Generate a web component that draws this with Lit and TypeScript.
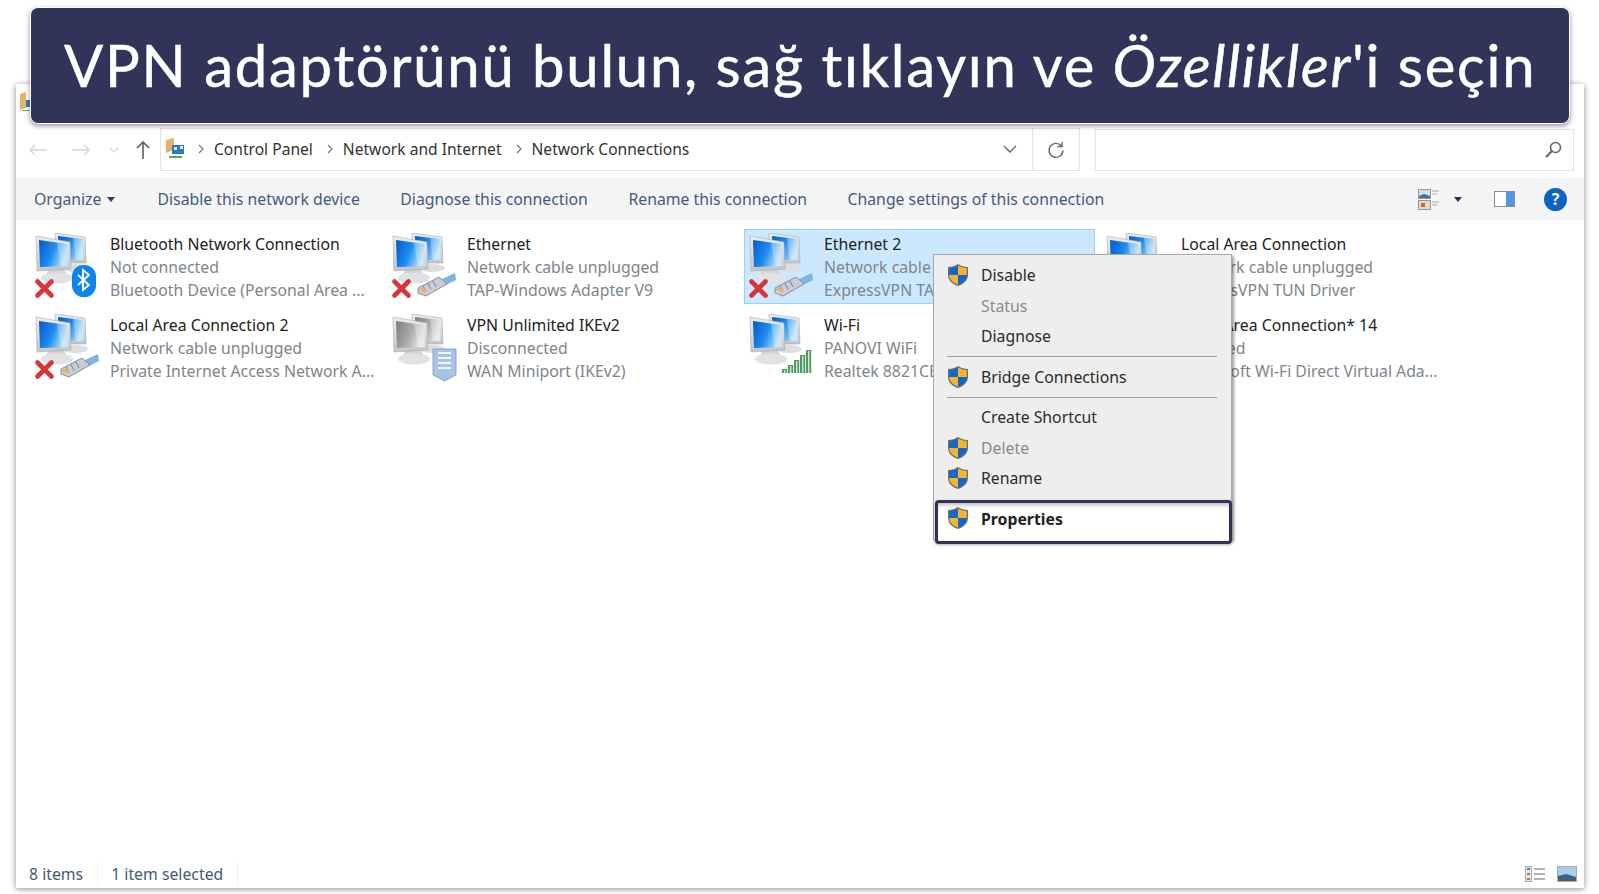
import { LitElement, html, css, svg } from 'lit';
import { customElement, property } from 'lit/decorators.js';

@customElement('net-icon')
class NetIcon extends LitElement {
  @property() badge = '';
  @property({ type: Boolean }) gray = false;
  @property({ type: Boolean }) cross = false;

  static styles = css`
    :host { display: block; width: 68px; height: 68px; flex: none; }
    svg { display: block; }
  `;

  monitor(frame: string, screen: string, shine: string) {
    return svg`
      <polygon points=${frame} fill="url(#frame)" stroke="#a8abae" stroke-width=".6" />
      <polygon points=${screen} fill="url(#screen)" />
      <polygon points=${shine} fill="#fff" opacity=".28" />
    `;
  }

  cable() {
    return svg`
      <path d="M52 46l13-6 1 7-12 6z" fill="#7fb4e4" />
      <path d="M28 55l21-11 8 7-21 12-8-3z" fill="#c9ced6" stroke="#7d858f" stroke-width=".9" />
      <path d="M33 53l3 6M38 50.500l3 6M43 48l3 6" stroke="#868e98" stroke-width="1.100" />
      <path d="M29 57l7 3 1-3-7-3z" fill="#e3b56a" />
    `;
  }

  bluetooth() {
    return svg`
      <rect x="39" y="32" width="24" height="32" rx="11.500" fill="#0d84ee" />
      <path d="M45 42l11 10-6 5V37l6 5-11 10" fill="none" stroke="#fff" stroke-width="1.900" />
    `;
  }

  server() {
    return svg`
      <path d="M43 35h23v26l-11.500 6-11.500-6z" fill="#a9c4e2" stroke="#7d95b2" stroke-width=".8" />
      <path d="M48 39h13M48 44h13M48 49h13M48 54h13" stroke="#eef5fc" stroke-width="2" />
    `;
  }

  wifi() {
    const bars = [[35, 55, 4], [41, 51, 8], [47, 46, 13], [53, 41, 18], [59, 36, 23]];
    return bars.map(([x, y, h]) => svg`
      <rect x=${x} y=${y} width="5.200" height=${h} fill="#4f9a63" />
      <rect x=${x + 2} y=${y + 1} width="1.400" height=${h - 1} fill="#cfe6d4" />
    `);
  }

  render() {
    const [a, b, c] = this.gray
      ? ['#7c7c7c', '#a8a8a8', '#e2e2e2']
      : ['#0858c8', '#1d8cf0', '#b4def9'];
    return html`<svg width="68" height="68" viewBox="0 0 68 68">
      <defs>
        <linearGradient id="screen" x1="0" y1="0" x2="1" y2=".35">
          <stop offset="0" stop-color=${a} />
          <stop offset=".55" stop-color=${b} />
          <stop offset="1" stop-color=${c} />
        </linearGradient>
        <linearGradient id="frame" x1="0" y1="0" x2="0" y2="1">
          <stop offset="0" stop-color="#eceded" />
          <stop offset="1" stop-color="#c3c6c8" />
        </linearGradient>
      </defs>
      <ellipse cx="42" cy="35" rx="13" ry="4" fill="#dcdedf" />
      ${this.monitor('22,0 52,4 53,30 23,30', '25,3 50,6 50.500,27 26,27', '40,4.500 50,6 50.500,27 43,27')}
      <path d="M16 35h14l4 7H13z" fill="#d2d4d5" />
      <ellipse cx="24" cy="45" rx="16" ry="5.500" fill="#e1e2e3" />
      ${this.monitor('3,3 37,9 38,36 4,38', '6,7 34,11 35,33 7,34', '24,9.500 34,11 35,33 28,33.300')}
      ${this.badge === 'cable' ? this.cable() : ''}
      ${this.badge === 'bluetooth' ? this.bluetooth() : ''}
      ${this.badge === 'server' ? this.server() : ''}
      ${this.badge === 'wifi' ? this.wifi() : ''}
      ${this.cross ? svg`<path d="M4.500 48.500l14 14M18.500 48.500l-14 14" stroke="#d8353a" stroke-width="4.600" stroke-linecap="round" />` : ''}
    </svg>`;
  }
}

const shield = svg`<svg width="22" height="24" viewBox="0 0 22 24">
  <path d="M11 1c3 2 6 3 10 3v8c0 5-4 9-10 11C5 21 1 17 1 12V4c4 0 7-1 10-3z" fill="#6d6f76" />
  <path d="M11 2.500V12H2.300V5c3.500 0 6-1 8.700-2.500z" fill="#1267c8" />
  <path d="M11 2.500c2.700 1.500 5.200 2.500 8.700 2.500v7H11z" fill="#f8b52c" />
  <path d="M2.300 12H11v9.500C6 19.700 2.300 16.500 2.300 12z" fill="#f8b52c" />
  <path d="M11 12h8.700c0 4.500-3.700 7.700-8.700 9.500z" fill="#1267c8" />
</svg>`;

const chevron = svg`<svg width="7" height="10" viewBox="0 0 7 10"><path d="M1 1l4 4-4 4" fill="none" stroke="#777" stroke-width="1.200" /></svg>`;

interface Item { title: string; status: string; device: string; badge: string; cross?: boolean; gray?: boolean; selected?: boolean }

const items: Item[] = [
  { title: 'Bluetooth Network Connection', status: 'Not connected', device: 'Bluetooth Device (Personal Area ...', badge: 'bluetooth', cross: true },
  { title: 'Ethernet', status: 'Network cable unplugged', device: 'TAP-Windows Adapter V9', badge: 'cable', cross: true },
  { title: 'Ethernet 2', status: 'Network cable unplugged', device: 'ExpressVPN TAP Adapter', badge: 'cable', cross: true, selected: true },
  { title: 'Local Area Connection', status: 'Network cable unplugged', device: 'ExpressVPN TUN Driver', badge: 'cable', cross: true },
  { title: 'Local Area Connection 2', status: 'Network cable unplugged', device: 'Private Internet Access Network A...', badge: 'cable', cross: true },
  { title: 'VPN Unlimited IKEv2', status: 'Disconnected', device: 'WAN Miniport (IKEv2)', badge: 'server', gray: true },
  { title: 'Wi-Fi', status: 'PANOVI WiFi', device: 'Realtek 8821CE Wireless LAN', badge: 'wifi' },
  { title: 'Local Area Connection* 14', status: 'Disabled', device: 'Microsoft Wi-Fi Direct Virtual Ada...', badge: 'wifi' },
];

const menu = [
  { label: 'Disable', shield: true },
  { label: 'Status', disabled: true },
  { label: 'Diagnose' },
  { sep: true },
  { label: 'Bridge Connections', shield: true },
  { sep: true },
  { label: 'Create Shortcut' },
  { label: 'Delete', shield: true, disabled: true },
  { label: 'Rename', shield: true },
];

@customElement('app-root')
class AppRoot extends LitElement {
  static styles = css`
    :host {
      display: block;
      position: relative;
      height: 894px;
      overflow: hidden;
      background: #fff;
      font-family: "Noto Sans", sans-serif;
      font-size: 15.800px;
      color: #2b2b2b;
    }
    .banner {
      position: absolute;
      left: 30px;
      top: 7px;
      width: 1540px;
      height: 117px;
      box-sizing: border-box;
      border: 1px solid #fff;
      border-radius: 8px;
      background: #323358;
      box-shadow: 0 2px 5px rgba(60, 60, 80, .55);
      color: #fff;
      display: flex;
      align-items: center;
      padding: 0 0 2px 33px;
      font-family: Lato, sans-serif;
      font-size: 58px;
      letter-spacing: 1.740px;
      -webkit-text-stroke: .5px #fff;
      white-space: nowrap;
      z-index: 3;
    }
    .window {
      position: absolute;
      left: 16px;
      top: 84px;
      width: 1568px;
      height: 804px;
      box-sizing: border-box;
      display: flex;
      flex-direction: column;
      background: #fff;
      box-shadow: 0 1px 6px rgba(0, 0, 0, .45);
    }
    .appicon { position: absolute; left: 4px; top: 8px; }
    .nav {
      display: flex;
      align-items: center;
      height: 43px;
      margin-top: 44px;
      padding: 0 10px 0 0;
      flex: none;
    }
    .navbtn { width: 43px; display: flex; justify-content: center; }
    .navbtn.small { width: 24px; }
    .navbtn.up { width: 34px; }
    .address {
      margin-left: 0;
      width: 920px;
      height: 43px;
      box-sizing: border-box;
      border: 1px solid #e4e4e4;
      display: flex;
      align-items: center;
      padding: 0 0 2px 4px;
      color: #333;
      font-size: 15.600px;
    }
    .address > svg:first-child { margin-right: 12px; }
    .crumb { margin: 0 14px 0 9px; white-space: nowrap; }
    .address .grow { flex: 1; }
    .refresh {
      width: 46px;
      height: 41px;
      margin-bottom: -2px;
      border-left: 1px solid #e4e4e4;
      display: flex;
      align-items: center;
      justify-content: center;
      margin-left: 15px;
    }
    .search {
      margin-left: 15px;
      flex: 1;
      height: 42px;
      box-sizing: border-box;
      border: 1px solid #e4e4e4;
      display: flex;
      align-items: center;
      justify-content: flex-end;
      padding-right: 11px;
    }
    .toolbar {
      display: flex;
      align-items: center;
      height: 42px;
      margin-top: 7px;
      padding-left: 18px;
      background: #f4f5f7;
      color: #47597a;
      flex: none;
      white-space: nowrap;
    }
    .toolbar span.cmd { margin-right: 40.500px; }
    .organize { display: flex; align-items: center; gap: 6px; margin-right: 42px; }
    .arrow { width: 0; height: 0; border: 4.500px solid transparent; border-top: 5px solid #3a3a55; border-bottom: 0; }
    .tools { margin-left: auto; display: flex; align-items: center; padding-right: 17px; }
    .viewarrow { margin-left: 14px; border-top-color: #2f2f55; }
    .pane { margin-left: 32px; }
    .help {
      width: 23px;
      height: 23px;
      border-radius: 50%;
      background: #0d62c4;
      color: #fff;
      font-weight: 700;
      font-size: 16px;
      line-height: 23px;
      text-align: center;
      margin-left: 29px;
    }
    .grid {
      flex: 1;
      display: grid;
      grid-template-columns: repeat(4, 351px);
      grid-auto-rows: 75px;
      gap: 6px;
      align-content: start;
      padding: 9px 0 0 14px;
    }
    .item {
      display: flex;
      box-sizing: border-box;
      padding: 3px 2px;
      border: 1px solid transparent;
      overflow: hidden;
    }
    .item.selected { background: #cce8ff; border-color: #99d1ff; }
    .text { margin-left: 9px; line-height: 22.800px; white-space: nowrap; min-width: 0; }
    .title { color: #222; }
    .muted { color: #7e858c; }
    .status {
      display: flex;
      align-items: center;
      height: 29px;
      padding: 0 0 0 13px;
      box-sizing: border-box;
      color: #47597a;
      flex: none;
    }
    .status span { padding-right: 14px; margin-right: 13px; border-right: 1px solid #f0f0f0; }
    .status .end { margin-left: auto; padding-right: 7px; display: flex; gap: 11px; }
    .menu {
      position: absolute;
      left: 933px;
      top: 254px;
      width: 299px;
      height: 286px;
      box-sizing: border-box;
      padding: 5px 0;
      background: #eee;
      border: 1px solid #a9a9a9;
      box-shadow: 2px 2px 3px rgba(0, 0, 0, .4);
      z-index: 2;
    }
    .mi {
      height: 30.500px;
      display: flex;
      align-items: center;
      padding-left: 47px;
      position: relative;
      color: #2b2b2b;
    }
    .mi.disabled { color: #8b8b8b; }
    .mi svg { position: absolute; left: 13px; top: 3px; }
    .sep { height: 1px; background: #a0a0a0; margin: 4.500px 14px 4.500px 13px; }
    .props {
      position: absolute;
      left: 1px;
      top: 245px;
      width: 297px;
      height: 44px;
      box-sizing: border-box;
      border: 3px solid #323358;
      border-radius: 4px;
      background: #fff;
      box-shadow: inset 0 4px 4px -2px #bbb, 0 1px 3px rgba(0, 0, 0, .3);
      display: flex;
      align-items: center;
      padding: 0 0 7px 43px;
      font-weight: 700;
      color: #222;
    }
    .props svg { position: absolute; left: 9px; top: 3px; }
  `;

  render() {
    return html`
      <div class="window">
        <svg class="appicon" width="12" height="20" viewBox="0 0 12 20">
          <path d="M0 2l6-2v16l-6 2z" fill="#e3b565" />
          <path d="M6 8h6v7H6z" fill="#2a7bd0" />
          <path d="M2 18h8v1H2z" fill="#57a85f" />
        </svg>
        <div class="nav">
          <div class="navbtn"><svg width="18" height="12" viewBox="0 0 18 12"><path d="M18 6H1M6 1L1 6l5 5" fill="none" stroke="#d6d6d6" stroke-width="1.500" /></svg></div>
          <div class="navbtn"><svg width="18" height="12" viewBox="0 0 18 12"><path d="M0 6h17M12 1l5 5-5 5" fill="none" stroke="#d6d6d6" stroke-width="1.500" /></svg></div>
          <div class="navbtn small"><svg width="10" height="6" viewBox="0 0 10 6"><path d="M1 1l4 4 4-4" fill="none" stroke="#d6d6d6" stroke-width="1.200" /></svg></div>
          <div class="navbtn up"><svg width="14" height="18" viewBox="0 0 14 18"><path d="M7 18V1M1 7l6-6 6 6" fill="none" stroke="#5d5d5d" stroke-width="1.600" /></svg></div>
          <div class="address">
            <svg width="21" height="22" viewBox="0 0 21 22">
              <path d="M1 2l8-2v12l-8 3z" fill="#e0b36b" />
              <path d="M7 7h12v9H7z" fill="#2c78c8" />
              <path d="M9 9h3v3H9zM15 8h3v3h-3z" fill="#d8ecff" />
              <path d="M4 18h13v2H4z" fill="#56a65d" />
            </svg>
            ${chevron}
            <span class="crumb">Control Panel</span>
            ${chevron}
            <span class="crumb">Network and Internet</span>
            ${chevron}
            <span class="crumb">Network Connections</span>
            <span class="grow"></span>
            <svg width="14" height="8" viewBox="0 0 14 8"><path d="M1 1l6 6 6-6" fill="none" stroke="#666" stroke-width="1.400" /></svg>
            <div class="refresh">
              <svg width="18" height="18" viewBox="0 0 18 18"><path d="M14.500 5A7 7 0 1 0 16 9.500M15 1v4.500h-4.500" fill="none" stroke="#666" stroke-width="1.400" /></svg>
            </div>
          </div>
          <div class="search">
            <svg width="17" height="17" viewBox="0 0 17 17"><circle cx="10.500" cy="6.500" r="5" fill="none" stroke="#666" stroke-width="1.600" /><path d="M7 10l-6 6" stroke="#666" stroke-width="2.200" /></svg>
          </div>
        </div>
        <div class="toolbar">
          <div class="organize">Organize <i class="arrow"></i></div>
          <span class="cmd">Disable this network device</span>
          <span class="cmd">Diagnose this connection</span>
          <span class="cmd">Rename this connection</span>
          <span class="cmd">Change settings of this connection</span>
          <div class="tools">
            <svg width="22" height="21" viewBox="0 0 22 21">
              <rect x=".5" y=".5" width="12" height="9" fill="#cfe2f2" stroke="#999" />
              <path d="M1 7l5-2 6 2v2H1z" fill="#50708c" />
              <rect x=".5" y="11.500" width="12" height="9" fill="#e6d9c0" stroke="#999" />
              <path d="M3 14h4v4H3z" fill="#b5704a" />
              <path d="M14 2h7M14 5h5M14 13h7M14 16h5" stroke="#aaa" stroke-width="1.200" />
            </svg>
            <i class="arrow viewarrow"></i>
            <svg class="pane" width="21" height="16" viewBox="0 0 21 16">
              <rect x=".5" y=".5" width="20" height="15" fill="#fff" stroke="#8c8c8c" />
              <rect x="12" y="1" width="8" height="14" fill="#4f97e8" />
            </svg>
            <div class="help">?</div>
          </div>
        </div>
        <div class="grid">
          ${items.map(it => html`
            <div class="item ${it.selected ? 'selected' : ''}">
              <net-icon .badge=${it.badge} .gray=${!!it.gray} .cross=${!!it.cross}></net-icon>
              <div class="text">
                <div class="title">${it.title}</div>
                <div class="muted">${it.status}</div>
                <div class="muted">${it.device}</div>
              </div>
            </div>
          `)}
        </div>
        <div class="status">
          <span>8 items</span><span>1 item selected</span>
          <div class="end">
            <svg width="21" height="16" viewBox="0 0 21 16">
              <rect x=".5" y=".5" width="6" height="15" fill="#e4e8ee" stroke="#aaa" />
              <path d="M2 3h3" stroke="#3d80c8" stroke-width="2" />
              <path d="M2 8h3M2 13h3" stroke="#c76f2e" stroke-width="2" />
              <path d="M9 3h11M9 8h11M9 13h11" stroke="#999" stroke-width="1.400" />
            </svg>
            <svg width="20" height="16" viewBox="0 0 20 16">
              <rect x=".5" y=".5" width="19" height="15" fill="#a9cdea" stroke="#aaa" />
              <path d="M1 10l8-2 10 3v4H1z" fill="#40607f" />
            </svg>
          </div>
        </div>
      </div>
      <div class="menu">
        ${menu.map(m => m.sep
          ? html`<div class="sep"></div>`
          : html`<div class="mi ${m.disabled ? 'disabled' : ''}">${m.shield ? shield : ''}${m.label}</div>`)}
        <div class="props">${shield}Properties</div>
      </div>
      <div class="banner">VPN adaptörünü bulun, sağ tıklayın ve&nbsp;<em>Özellikler</em>'i seçin</div>
    `;
  }
}
